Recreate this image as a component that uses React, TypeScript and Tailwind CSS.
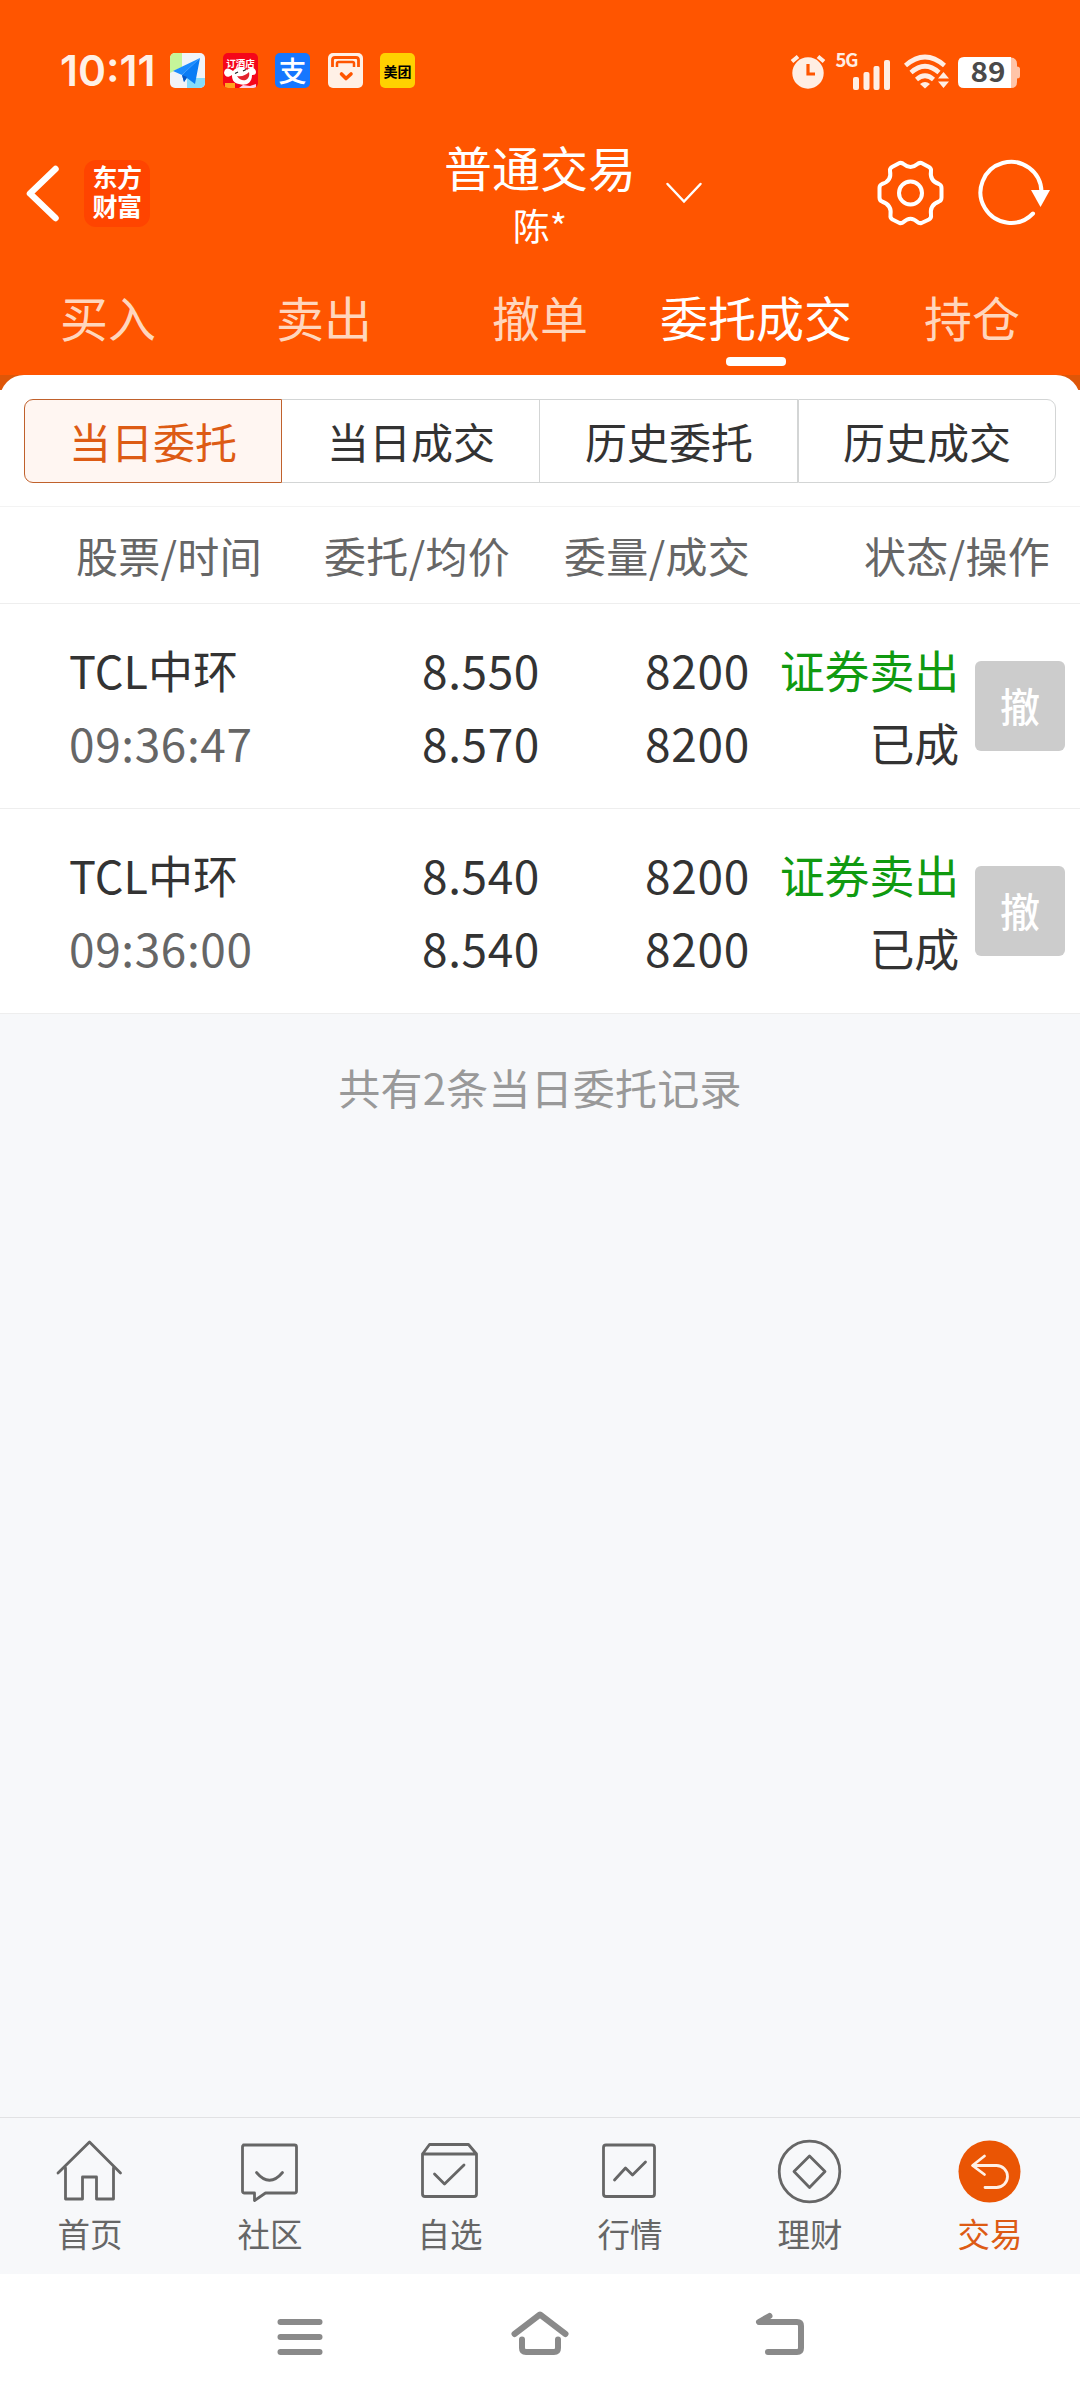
import React from "react";

const tabs = ["买入", "卖出", "撤单", "委托成交", "持仓"];
const segments = ["当日委托", "当日成交", "历史委托", "历史成交"];
const orders = [
  { name: "TCL中环", time: "09:36:47", price: "8.550", avg: "8.570", qty: "8200", done: "8200", side: "证券卖出", state: "已成" },
  { name: "TCL中环", time: "09:36:00", price: "8.540", avg: "8.540", qty: "8200", done: "8200", side: "证券卖出", state: "已成" },
];

function StatusBar() {
  return (
    <div className="flex h-[140px] items-start justify-between pl-[60px] pr-[60px] pt-[53px]">
      <div className="flex items-start">
        <span className="w-[110px] whitespace-nowrap font-['Inter',sans-serif] text-[42.5px] font-semibold leading-[36px] text-[#fff0e6]">10:11</span>
        <div className="flex gap-[17.5px]">
          <svg width="35" height="35" viewBox="0 0 35 35">
            <defs><clipPath id="map"><rect width="35" height="35" rx="5" /></clipPath></defs>
            <g clipPath="url(#map)">
              <rect width="35" height="35" fill="#f1f4f8" />
              <path d="M0 0H12V14L0 20Z" fill="#c5f59a" />
              <path d="M17 25H35V35H17Z" fill="#86dcfb" />
              <path d="M30 5L3 18L12 22Z" fill="#1a8cff" />
              <path d="M30 5L12 22L14 29L17 25L25 31Z" fill="#0a7cf5" />
              <path d="M12 22L14 29L17 24Z" fill="#0757c4" />
            </g>
          </svg>
          <svg width="35" height="35" viewBox="0 0 35 35">
            <defs><clipPath id="shop"><rect width="35" height="35" rx="5" /></clipPath></defs>
            <g clipPath="url(#shop)">
              <rect width="35" height="35" fill="#f5061a" />
              <path d="M1 20C2 14 6 15 10 18C14 13 20 13 24 17C28 13 33 15 33 19C33 22 30 22 29 22C29 31 22 33 16 31C10 30 9 26 9 22C5 25 2 24 1 20Z" fill="#fff" />
              <path d="M14 23C19 24 23 22 26 19C28 27 19 31 14 23Z" fill="#e3232e" />
              <path d="M12 20.500L15 19M20 18L23 16.500" stroke="#222" strokeWidth="1.300" />
              <rect x="2" y="30" width="10" height="5" fill="#ffa51f" />
              <path d="M16 35L20 32L27 33L33 31V35Z" fill="#fbd5ec" />
              <text x="17.500" y="14" textAnchor="middle" fontSize="9.500" fontWeight="700" fill="#fff">订酒店</text>
            </g>
          </svg>
          <div className="flex h-[35px] w-[35px] items-center justify-center rounded-[5px] bg-[#1677ff] pb-[2px] text-[28px] font-medium leading-none text-white">支</div>
          <svg width="35" height="35" viewBox="0 0 35 35">
            <rect width="35" height="35" rx="5" fill="#fff0e6" />
            <path d="M4.500 14V7Q4.500 4.500 7 4.500H28Q30.500 4.500 30.500 7V14" fill="none" stroke="#ff5500" strokeWidth="2.800" />
            <path d="M9 14V10.500Q9 9 10.500 9H24.500Q26 9 26 10.500V14" fill="none" stroke="#ff5500" strokeWidth="2.500" />
            <path d="M13.500 21L18 25.500L23 21" fill="none" stroke="#ff5500" strokeWidth="3.600" strokeLinecap="round" strokeLinejoin="round" />
          </svg>
          <div className="flex h-[35px] w-[35px] items-center justify-center rounded-[5px] bg-[#ffd100] text-[14px] font-bold leading-none text-black">美团</div>
        </div>
      </div>
      <svg width="232" height="42" viewBox="788 53 232 42" fill="#ffeee4" className="overflow-visible">
        <circle cx="808" cy="73" r="15.700" />
        <path d="M792 61.500L798 56.500M824 61.500L818 56.500" stroke="#ffeee4" strokeWidth="4" />
        <path d="M808 64V74H815" fill="none" stroke="#ff5500" strokeWidth="3.200" />
        <text x="835.500" y="67" fontSize="18.500" fontWeight="700" textLength="23">5G</text>
        <rect x="853" y="77" width="6" height="13" rx="2" />
        <rect x="863.500" y="72" width="6" height="18" rx="2" />
        <rect x="873.500" y="66" width="6" height="24" rx="2" />
        <rect x="884" y="60" width="6" height="30" rx="2" />
        <g fill="none" stroke="#ffeee4" strokeWidth="4.600">
          <path d="M905.500 65.500Q925 48.500 944.500 65.500" />
          <path d="M911 72.500Q925 60 939 72.500" />
          <path d="M916.500 79.500Q925 72 933.500 79.500" />
        </g>
        <path d="M920 84Q925 80 930 84L925 88.500Z" />
        <path d="M938 78.500L943.500 72L949 78.500ZM938 81.500L943.500 88L949 81.500Z" />
        <path d="M1011 57.500Q1017 58 1017 64V66.500Q1020 66.500 1020 69V76Q1020 78.500 1017 78.500V82Q1017 88 1011 88Z" fill="#ffc4a8" />
        <path d="M964 57H1011V88H964Q958 88 958 82V63Q958 57 964 57Z" fill="#fff" />
        <text x="970.500" y="82" fontSize="27" fontWeight="700" fill="#4a4a4a" textLength="35" lengthAdjust="spacingAndGlyphs">89</text>
      </svg>
    </div>
  );
}

function TitleBar() {
  return (
    <div className="relative flex h-[120px] items-start">
      <svg className="ml-[24px] mt-[24px]" width="38" height="60" viewBox="24 164 38 60">
        <path d="M55.500 169L30 193.500L55.500 218" fill="none" stroke="#fff" strokeWidth="6.500" strokeLinecap="round" strokeLinejoin="round" />
      </svg>
      <p className="ml-[22px] mt-[20px] h-[67px] w-[66px] rounded-[12px] bg-[#ff4400] pt-[2px] text-center text-[25px] font-bold leading-[29px] tracking-[-0.500px] text-white">
        东方
        <br />
        财富
      </p>
      <div className="absolute left-1/2 top-0 flex -translate-x-1/2 flex-col items-center text-white">
        <span className="-mt-[2px] whitespace-nowrap text-[48px] leading-[56px]">普通交易</span>
        <span className="mt-[6px] whitespace-nowrap text-[37px] leading-[50px]">陈*</span>
      </div>
      <svg className="absolute left-[662px] top-[40px]" width="44" height="28" viewBox="662 180 44 28">
        <path d="M667.500 184L684 201.500L700.500 184" fill="none" stroke="#fff" strokeWidth="2.500" strokeLinecap="round" />
      </svg>
      <svg className="ml-auto mt-[16px]" width="72" height="74" viewBox="874 156 72 74" fill="none" stroke="#fff">
        <path strokeWidth="4" strokeLinejoin="round" d="M899.500 163L892 167Q889.500 168.500 890 171Q892 181 882 184Q879.500 185 879.500 188V197.500Q879.500 200.500 882 201.500Q892 205 890.500 215Q890 218 892.500 219.500L899.500 223Q902 223.500 903.500 222Q910.500 215.500 917.500 222Q919 223.500 921.500 223L929 219.500Q931.500 218 931 215Q929.500 205 939 201.500Q941.500 200.500 941.500 197.500V188Q941.500 185 939 184Q929.500 181 931 171Q931.500 168.500 929 167L921.500 163Q919 162.500 917.500 164Q910.500 170 903.500 164Q902 162.500 899.500 163Z" />
        <circle cx="910.500" cy="193" r="11.500" strokeWidth="4" />
      </svg>
      <svg className="ml-[30px] mr-[28px] mt-[16px]" width="76" height="74" viewBox="976 156 76 74">
        <path d="M1041.500 192A30.500 30.500 0 1 0 1033 213.500" fill="none" stroke="#fff" strokeWidth="4" strokeLinecap="round" />
        <path d="M1031 190H1050L1040.500 207Z" fill="#fff" />
      </svg>
    </div>
  );
}

function OrderRow({ o }: { o: (typeof orders)[number] }) {
  return (
    <div className="flex h-[205px] items-center border-b border-[#eeeeee] text-[45px] leading-[73px] text-[#333333]">
      <div className="-mt-[1px] ml-[69px] w-[200px] shrink-0 whitespace-nowrap">
        <div>{o.name}</div>
        <div className="text-[46px] tracking-[0.600px] text-[#666666]">{o.time}</div>
      </div>
      <div className="-mt-[1px] w-[271px] text-right text-[46px] tracking-[0.600px]">
        <div>{o.price}</div>
        <div>{o.avg}</div>
      </div>
      <div className="-mt-[1px] w-[210px] text-right text-[46px] tracking-[0.700px]">
        <div>{o.qty}</div>
        <div>{o.done}</div>
      </div>
      <div className="-mt-[1px] w-[209px] whitespace-nowrap text-right tracking-[-0.200px]">
        <div className="text-[#109a10]">{o.side}</div>
        <div>{o.state}</div>
      </div>
      <button className="ml-[16px] flex h-[90px] w-[90px] items-center justify-center rounded-[6px] bg-[#cccccc] pb-[2px] text-[40px] font-medium leading-none text-white">撤</button>
    </div>
  );
}

const bottomItems = [
  {
    label: "首页",
    icon: (
      <g>
        <path d="M3.500 35L35 4L66 35" />
        <path d="M11 30V61H28V39H42V61H59V30" />
      </g>
    ),
  },
  {
    label: "社区",
    icon: (
      <g>
        <path d="M9 7H60Q62 7 62 9V53Q62 55 60 55H31L20 62.500V55H10Q8 55 8 53V9Q8 7 10 7" />
        <path d="M22 34.500Q35 50 48 34.500" />
      </g>
    ),
  },
  {
    label: "自选",
    icon: (
      <g>
        <path d="M8 16L15 6.500H54L62 16V56Q62 58.500 59.500 58.500H10.500Q8 58.500 8 56ZM8 16H62" />
        <path d="M20 36L30 46L49.500 27" />
      </g>
    ),
  },
  {
    label: "行情",
    icon: (
      <g>
        <rect x="9" y="7" width="51" height="51.500" rx="2.500" />
        <path d="M20 42L31 30L38 37L51 24" />
      </g>
    ),
  },
  {
    label: "理财",
    icon: (
      <g>
        <circle cx="35" cy="33.500" r="30.300" />
        <path d="M35 18L50.500 33.500L35 49.500L19.500 33.500Z" />
      </g>
    ),
  },
  {
    label: "交易",
    active: true,
    icon: (
      <g>
        <circle cx="35" cy="33.500" r="31" fill="#ea5504" stroke="none" />
        <path d="M30 18L18 27.500L30 36.500M18.500 27.500H42A10.800 10.800 0 0 1 42 49.500H30.500" stroke="#fff0e6" />
      </g>
    ),
  },
];

export default function App() {
  return (
    <div className="flex h-[2400px] w-[1080px] flex-col overflow-hidden bg-[#f7f8fa] font-['Noto_Sans_CJK_SC',sans-serif]">
      <header className="h-[375px] bg-[#ff5500]">
        <StatusBar />
        <TitleBar />
        <nav className="grid h-[115px] grid-cols-5">
          {tabs.map((t, i) => (
            <div key={t} className="flex flex-col items-center pt-[20px]">
              <span className={i === 3 ? "whitespace-nowrap text-[48px] leading-[72px] text-white" : "whitespace-nowrap text-[48px] leading-[72px] text-[#ffd6bd]"}>{t}</span>
              {i === 3 && <span className="mt-[5px] h-[9px] w-[60px] rounded-[4px] bg-white" />}
            </div>
          ))}
        </nav>
      </header>

      <main className="flex-1">
        <div className="bg-[linear-gradient(#de5608_15px,#ffffff_15px)]">
          <section className="h-[132px] rounded-t-[24px] border-b border-[#f3f3f3] bg-white px-[24px] pt-[24px]">
            <div className="flex h-[84px]">
              {segments.map((s, i) => (
                <div
                  key={s}
                  className={
                    i === 0
                      ? "flex w-[258px] items-center justify-center rounded-l-[9px] border border-[#c0612c] bg-[#fff6f2] pb-[1px] text-[42px] leading-none text-[#dd5b14]"
                      : i === 3
                        ? "flex w-[258px] items-center justify-center rounded-r-[9px] border border-[#d3d5d5] pb-[1px] text-[42px] leading-none text-[#333333]"
                        : "flex w-[258px] items-center justify-center border-y border-r border-[#d3d5d5] pb-[1px] pl-[1px] text-[42px] leading-none text-[#333333]"
                  }
                >
                  {s}
                </div>
              ))}
            </div>
          </section>
        </div>
        <section className="bg-white">
          <div className="flex h-[97px] items-center border-b border-[#eeeeee] pb-[1px] text-[42px] leading-none tracking-[0.300px] text-[#666666]">
            <span className="ml-[76px] w-[200px] whitespace-nowrap">股票/时间</span>
            <span className="w-[234px] whitespace-nowrap text-right">委托/均价</span>
            <span className="w-[240px] whitespace-nowrap text-right">委量/成交</span>
            <span className="w-[300px] whitespace-nowrap text-right">状态/操作</span>
          </div>
          {orders.map((o) => (
            <OrderRow key={o.time} o={o} />
          ))}
        </section>
        <p className="pt-[48px] text-center text-[42px] leading-[50px] tracking-[0.200px] text-[#999999]">共有2条当日委托记录</p>
      </main>

      <nav className="grid h-[157px] grid-cols-6 border-t border-[#e2e2e4]">
        {bottomItems.map((b) => (
          <div key={b.label} className={b.active ? "flex flex-col items-center pt-[20px] text-[#dd5b14]" : "flex flex-col items-center pt-[20px] text-[#666666]"}>
            <svg width="70" height="70" viewBox="0.500 0 70 70" fill="none" stroke="#666666" strokeWidth="2.800" strokeLinejoin="round" strokeLinecap="round">
              {b.icon}
            </svg>
            <span className="mt-[5px] text-[32.500px] leading-[40px]">{b.label}</span>
          </div>
        ))}
      </nav>

      <div className="flex h-[126px] items-start bg-white pt-[34px]">
        <svg className="ml-[270px]" width="60" height="52" viewBox="270 2308 60 52" fill="#8a8a8a">
          <rect x="277.500" y="2319" width="45" height="6" rx="3" />
          <rect x="277.500" y="2334" width="45" height="6" rx="3" />
          <rect x="277.500" y="2349" width="45" height="6" rx="3" />
        </svg>
        <svg className="ml-[175px]" width="70" height="52" viewBox="505 2308 70 52" fill="none" stroke="#8a8a8a" strokeWidth="6" strokeLinecap="round" strokeLinejoin="round">
          <path d="M514.500 2334L540 2314.500L565.500 2334" />
          <path d="M522 2339.500V2348Q522 2352 526 2352H554Q558 2352 558 2348V2339.500" />
        </svg>
        <svg className="ml-[175px]" width="60" height="52" viewBox="750 2308 60 52" fill="none" stroke="#8a8a8a" strokeWidth="6" strokeLinecap="round" strokeLinejoin="round">
          <path d="M769.500 2316L759 2322H797Q801 2322 801 2326V2348Q801 2352 797 2352H768" />
        </svg>
      </div>
    </div>
  );
}
